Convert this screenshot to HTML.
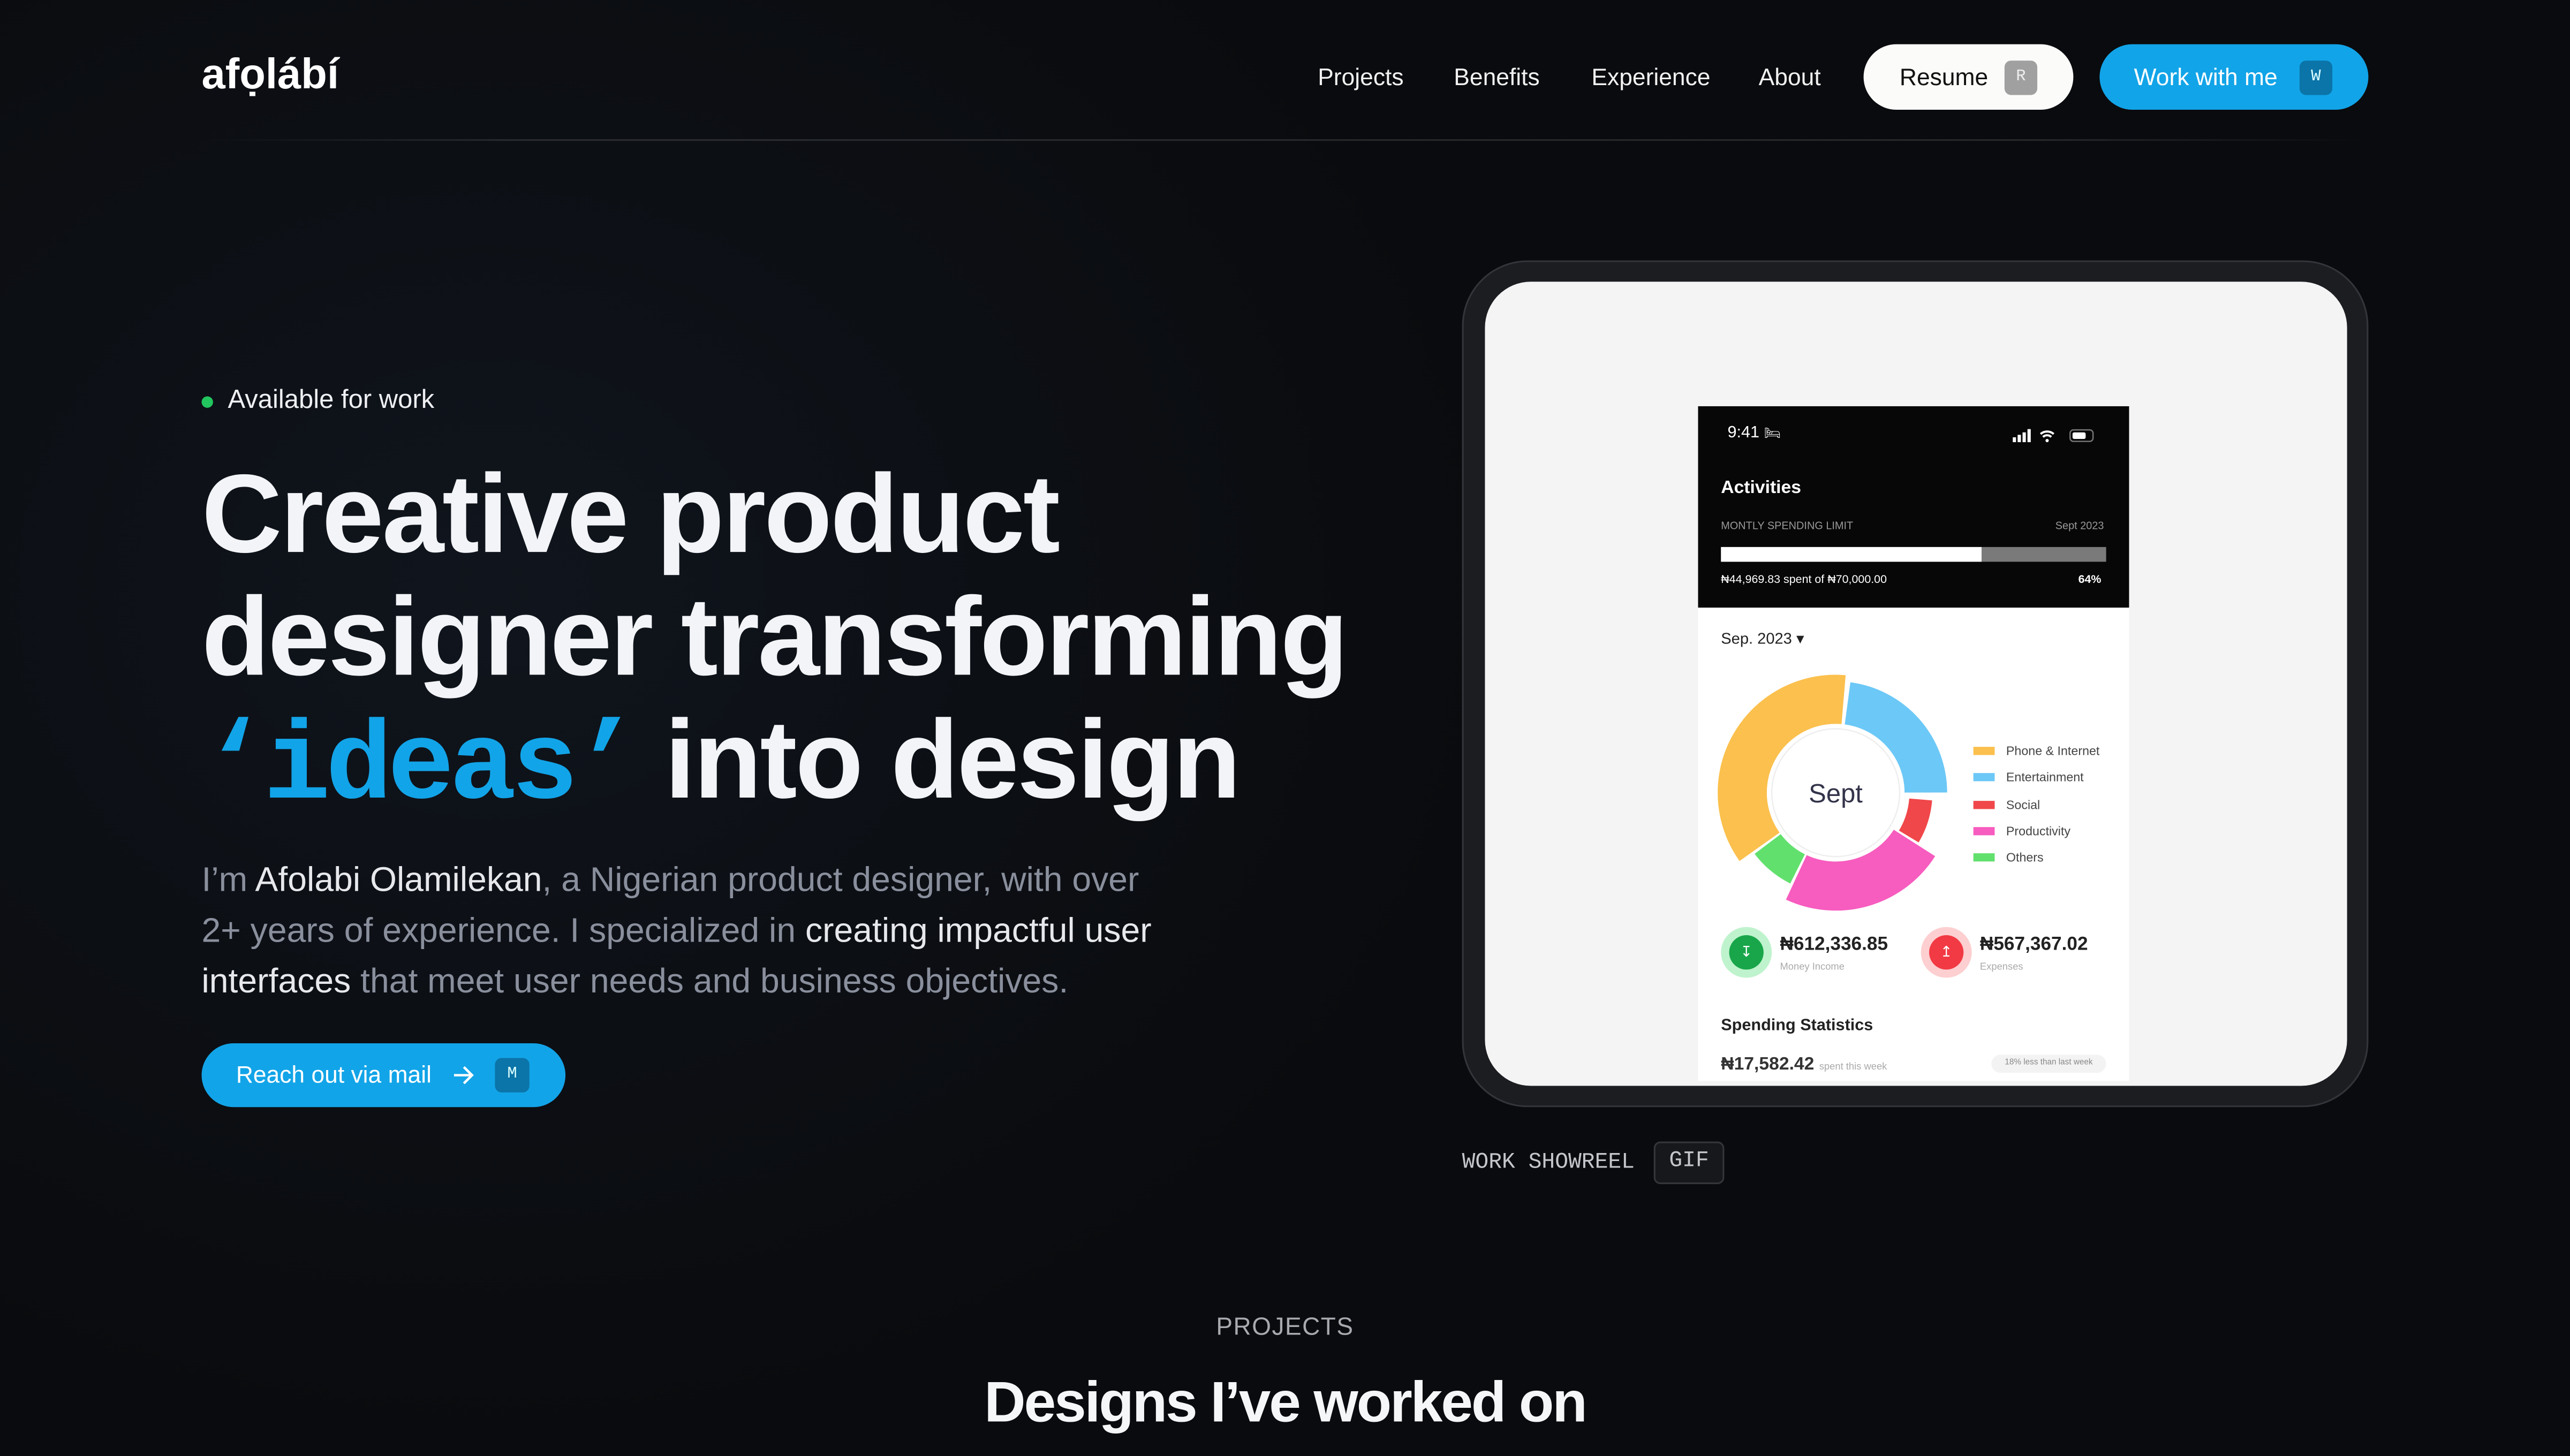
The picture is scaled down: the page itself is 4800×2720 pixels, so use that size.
<!DOCTYPE html>
<html><head><meta charset="utf-8">
<style>
*{margin:0;padding:0;box-sizing:border-box}
html,body{width:4800px;height:2720px;overflow:hidden;background:#0a0b0e}
#s{position:absolute;left:0;top:0;width:1568px;height:889px;transform:scale(3.0612,3.0596);transform-origin:0 0;
background:radial-gradient(ellipse 620px 520px at 300px 360px,#10151d 0%,#0c0f14 55%,#0a0b0e 100%);font-family:"Liberation Sans",sans-serif;color:#fff;overflow:hidden}
.a{position:absolute;white-space:nowrap}
.nav{font-size:14.5px;color:#f1f1f1;top:40px}
.kb{display:inline-block;border-radius:4px;font-family:"Liberation Mono",monospace;font-size:10px;text-align:center}
h1{position:absolute;left:123px;top:277px;font-size:68px;line-height:75px;font-weight:700;letter-spacing:-1.1px;color:#f2f4f7;white-space:nowrap}
.mono{font-family:"Liberation Mono",monospace;color:#12a4e8;letter-spacing:-3px}
p.d{position:absolute;left:123px;top:522px;font-size:21px;line-height:31px;color:#8a8f9d;width:598px;letter-spacing:0px}
p.d b{color:#e6e8ec;font-weight:400}
.ph{position:absolute;left:1036px;top:248px;width:263px;height:412px;background:#fff;overflow:hidden;font-family:"Liberation Sans",sans-serif;color:#222}
.lg{font-size:7.6px;color:#444;position:absolute;left:1224px}
.sw{position:absolute;left:1204px;width:13px;height:5px}
</style></head><body><div id="s">
<div class="a" style="left:123px;top:30px;font-size:26px;font-weight:700;color:#fff">afọlábí</div>
<div class="a nav" style="left:804px">Projects</div>
<div class="a nav" style="left:887px">Benefits</div>
<div class="a nav" style="left:971px">Experience</div>
<div class="a nav" style="left:1073px">About</div>
<div class="a" style="left:1137px;top:27px;width:128px;height:40px;border-radius:20px;background:#fbfbf9"></div>
<div class="a" style="left:1159px;top:40px;font-size:14.5px;color:#111">Resume</div>
<div class="a kb" style="left:1223px;top:37px;width:20px;height:21px;line-height:21px;background:#a0a0a0;color:#eee">R</div>
<div class="a" style="left:1281px;top:27px;width:164px;height:40px;border-radius:20px;background:#12a4e8"></div>
<div class="a" style="left:1302px;top:40px;font-size:14.5px;color:#fff">Work with me</div>
<div class="a kb" style="left:1403px;top:37px;width:20px;height:21px;line-height:21px;background:#0b74a8;color:#dff">W</div>
<div class="a" style="left:123px;top:85px;width:1322px;height:1px;background:linear-gradient(90deg,rgba(255,255,255,0),rgba(255,255,255,.12) 15%,rgba(255,255,255,.12) 85%,rgba(255,255,255,0))"></div>
<div class="a" style="left:123px;top:242px;width:7px;height:7px;border-radius:50%;background:#22c55e"></div>
<div class="a" style="left:139px;top:236px;font-size:16px;color:#eef0f3">Available for work</div>
<h1>Creative product<br>designer transforming<br><span class="mono">‘ideas’</span> into design</h1>
<p class="d">I’m <b>Afolabi Olamilekan</b>, a Nigerian product designer, with over 2+ years of experience. I specialized in <b>creating impactful user interfaces</b> that meet user needs and business objectives.</p>
<div class="a" style="left:123px;top:637px;width:222px;height:39px;border-radius:20px;background:#12a4e8"></div>
<div class="a" style="left:144px;top:649px;font-size:14.5px;color:#fff">Reach out via mail</div>
<svg class="a" style="left:276px;top:650px" width="14" height="13" viewBox="0 0 14 13"><path d="M1 6.5H12M7 1.5l5 5-5 5" fill="none" stroke="#fff" stroke-width="1.5"/></svg>
<div class="a kb" style="left:302px;top:646px;width:21px;height:21px;line-height:21px;background:#0b74a8;color:#dff">M</div>
<div class="a" style="left:892px;top:159px;width:553px;height:517px;border-radius:40px;background:#1c1d21;border:1.5px solid #34353b"></div>
<div class="a" style="left:906px;top:172px;width:526px;height:491px;border-radius:28px;background:#f4f4f5;overflow:hidden"></div>
<div class="ph">
 <div style="position:absolute;left:0;top:0;width:263px;height:123px;background:#070707"></div>
 <div class="a" style="left:18px;top:11px;font-size:10px;color:#fff">9:41 <span style="font-size:8px">🛏</span></div>
 <svg class="a" style="left:192px;top:13px" width="52" height="9" viewBox="0 0 52 9"><rect x="0" y="6" width="2" height="3" fill="#fff"/><rect x="3" y="4.5" width="2" height="4.5" fill="#fff"/><rect x="6" y="3" width="2" height="6" fill="#fff"/><rect x="9" y="1" width="2" height="8" fill="#fff"/><path d="M17 4a6 6 0 0 1 8 0M18.5 5.8a3.5 3.5 0 0 1 5 0" stroke="#fff" stroke-width="1.3" fill="none"/><circle cx="21" cy="8" r="1" fill="#fff"/><rect x="35" y="1.5" width="14" height="7" rx="2" fill="none" stroke="#777" stroke-width=".8"/><rect x="36.5" y="3" width="8" height="4" rx="1" fill="#fff"/></svg>
 <div class="a" style="left:14px;top:44px;font-size:11px;font-weight:700;color:#fff">Activities</div>
 <div class="a" style="left:14px;top:70px;font-size:6.5px;color:#999">MONTLY SPENDING LIMIT</div>
 <div class="a" style="left:218px;top:70px;font-size:6.5px;color:#999">Sept 2023</div>
 <div class="a" style="left:14px;top:86px;width:235px;height:9px;background:#7a7a7a"></div>
 <div class="a" style="left:14px;top:86px;width:159px;height:9px;background:#fff"></div>
 <div class="a" style="left:14px;top:103px;font-size:7px;color:#fff">₦44,969.83 spent of ₦70,000.00</div>
 <div class="a" style="left:232px;top:103px;font-size:7px;color:#fff;font-weight:700">64%</div>
 <div class="a" style="left:14px;top:137px;font-size:9.5px;color:#222">Sep. 2023 ▾</div>
 <div class="a" style="left:14px;top:373px;font-size:10px;font-weight:700;color:#222">Spending Statistics</div>
 <div class="a" style="left:14px;top:396px;font-size:11px;font-weight:700;color:#333">₦17,582.42 <span style="font-size:6px;color:#aaa;font-weight:400">spent this week</span></div>
 <div class="a" style="left:179px;top:396px;width:70px;height:11px;border-radius:6px;background:#f3f3f3;font-size:5px;color:#888;text-align:center;line-height:11px">18% less than last week</div>
</div>
<svg class="a" style="left:1048px;top:412px" width="144" height="144" viewBox="-72 -72 144 144">
 <g fill="none">
 <circle r="57" stroke="#fbc04d" stroke-width="30" pathLength="360" stroke-dasharray="130 230" transform="rotate(145)"/>
 <circle r="55" stroke="#6cc8f6" stroke-width="26" pathLength="360" stroke-dasharray="82 278" transform="rotate(-82)"/>
 <circle r="52" stroke="#f0474a" stroke-width="14" pathLength="360" stroke-dasharray="26 334" transform="rotate(5)"/>
 <circle r="57" stroke="#f75cbf" stroke-width="30" pathLength="360" stroke-dasharray="82 278" transform="rotate(33)"/>
 <circle r="52" stroke="#62e06e" stroke-width="20" pathLength="360" stroke-dasharray="26 334" transform="rotate(117)"/>
 </g>
 <circle r="42" fill="#fff"/><circle r="39" fill="none" stroke="#eee" stroke-width=".8"/>
 <text x="0" y="6" text-anchor="middle" font-family="Liberation Sans" font-size="16" fill="#33334a">Sept</text>
</svg>
<div class="sw" style="top:456px;background:#fbc04d"></div><div class="lg" style="top:454px">Phone &amp; Internet</div>
<div class="sw" style="top:472px;background:#6cc8f6"></div><div class="lg" style="top:470px">Entertainment</div>
<div class="sw" style="top:489px;background:#f0474a"></div><div class="lg" style="top:487px">Social</div>
<div class="sw" style="top:505px;background:#f75cbf"></div><div class="lg" style="top:503px">Productivity</div>
<div class="sw" style="top:521px;background:#62e06e"></div><div class="lg" style="top:519px">Others</div>
<div class="a" style="left:1050px;top:566px;width:31px;height:31px;border-radius:50%;background:#bff3cd"></div>
<div class="a" style="left:1055px;top:571px;width:21px;height:21px;border-radius:50%;background:#19a64a;color:#fff;font-size:9px;text-align:center;line-height:21px">↧</div>
<div class="a" style="left:1086px;top:571px;font-size:11.5px;font-weight:700;color:#222">₦612,336.85</div>
<div class="a" style="left:1086px;top:588px;font-size:6px;color:#aaa">Money Income</div>
<div class="a" style="left:1172px;top:566px;width:31px;height:31px;border-radius:50%;background:#fdcfd0"></div>
<div class="a" style="left:1177px;top:571px;width:21px;height:21px;border-radius:50%;background:#f23a44;color:#fff;font-size:9px;text-align:center;line-height:21px">↥</div>
<div class="a" style="left:1208px;top:571px;font-size:11.5px;font-weight:700;color:#222">₦567,367.02</div>
<div class="a" style="left:1208px;top:588px;font-size:6px;color:#aaa">Expenses</div>
<div class="a" style="left:892px;top:703px;font-family:'Liberation Mono',monospace;font-size:13.5px;color:#c4c6cc">WORK SHOWREEL</div>
<div class="a" style="left:1009px;top:697px;width:43px;height:26px;border-radius:4px;border:1px solid #34363b;background:#17181b;font-family:'Liberation Mono',monospace;font-size:13.5px;color:#c4c6cc;text-align:center;line-height:24px">GIF</div>
<div class="a" style="left:0;width:1568px;text-align:center;top:802px;font-size:15px;color:#a8aab0;letter-spacing:.5px">PROJECTS</div>
<div class="a" style="left:0;width:1568px;text-align:center;top:837px;font-size:35px;font-weight:700;color:#f5f6f8;letter-spacing:-1px">Designs I’ve worked on</div>
</div></body></html>
